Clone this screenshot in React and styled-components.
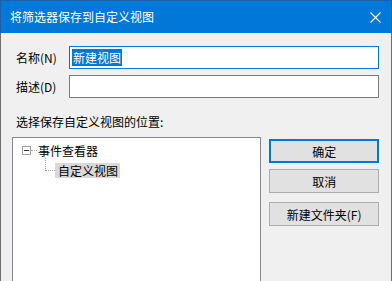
import styled, { createGlobalStyle } from "styled-components";

const GlobalStyle = createGlobalStyle`
  html, body {
    margin: 0;
    padding: 0;
    overflow: hidden;
    background: #f0f0f0;
  }
  * {
    box-sizing: border-box;
  }
`;

function CloseIcon() {
  return (
    <svg width="11" height="11" viewBox="0 0 11 11">
      <path d="M0.5 0.5 L10.5 10.5 M10.5 0.5 L0.5 10.5" stroke="#fff" strokeWidth="1.1" fill="none" />
    </svg>
  );
}

function App() {
  return (
    <>
      <GlobalStyle />
      <Window>
        <TitleBar>
          <Title>将筛选器保存到自定义视图</Title>
          <CloseBtn>
            <CloseIcon />
          </CloseBtn>
        </TitleBar>
        <Body>
          <Form>
            <Label>名称(N)</Label>
            <TextBox $focused>
              <Selected>新建视图</Selected>
            </TextBox>
            <Label>描述(D)</Label>
            <TextBox />
          </Form>
          <Caption>选择保存自定义视图的位置:</Caption>
          <Lower>
            <Tree>
              <ParentRow>
                <Expander />
                <HLine />
                <ItemText>事件查看器</ItemText>
              </ParentRow>
              <ChildRow>
                <Connector />
                <ItemText $selected>自定义视图</ItemText>
              </ChildRow>
            </Tree>
            <Buttons>
              <Button $default>确定</Button>
              <Button>取消</Button>
              <Button $spaced>新建文件夹(F)</Button>
            </Buttons>
          </Lower>
        </Body>
      </Window>
    </>
  );
}

const Window = styled.div`
  width: 392px;
  height: 281px;
  overflow: hidden;
  display: flex;
  flex-direction: column;
  font-family: "Noto Sans CJK SC", "Noto Sans", sans-serif;
  font-size: 12px;
  color: #000;
`;

const TitleBar = styled.div`
  flex: none;
  height: 33px;
  background: #0078d7;
  border: 1px solid #1c5fa6;
  border-bottom: none;
  display: flex;
  align-items: center;
  justify-content: space-between;
  padding: 0 10px 0 9px;
`;

const Title = styled.div`
  color: #fff;
  font-size: 12px;
  line-height: 16px;
`;

const CloseBtn = styled.div`
  width: 11px;
  height: 11px;
  display: flex;
  margin-top: 1px;
`;

const Body = styled.div`
  flex: 1;
  min-height: 0;
  overflow: hidden;
  background: #f0f0f0;
  border-left: 1px solid #6d6d6d;
  border-right: 1px solid #6d6d6d;
  padding: 13px 12px 0 11px;
  display: flex;
  flex-direction: column;
`;

const Form = styled.div`
  display: grid;
  grid-template-columns: 57px 1fr;
  row-gap: 6px;
  align-items: center;
`;

const Label = styled.div`
  padding-left: 4px;
  line-height: 16px;
`;

const TextBox = styled.div`
  height: 23px;
  background: #fff;
  border: 1px solid ${({ $focused }) => ($focused ? "#0078d7" : "#7a7a7a")};
  padding: 1px 2px;
  display: flex;
  align-items: center;
`;

const Selected = styled.span`
  background: #0078d7;
  color: #fff;
  line-height: 17px;
  padding: 0 1px;
`;

const Caption = styled.div`
  margin-top: 16px;
  padding-left: 4px;
  line-height: 16px;
`;

const Lower = styled.div`
  flex: none;
  display: flex;
  gap: 8px;
  margin-top: 7px;
`;

const Tree = styled.div`
  width: 250px;
  height: 170px;
  background: #fff;
  border: 1px solid #828790;
  padding-top: 4px;
  display: flex;
  flex-direction: column;
`;

const ParentRow = styled.div`
  display: flex;
  align-items: center;
  height: 16px;
  padding-left: 9px;
`;

const Expander = styled.div`
  width: 9px;
  height: 9px;
  border: 1px solid #a0a0a0;
  position: relative;
  &::after {
    content: "";
    position: absolute;
    left: 1px;
    top: 3px;
    width: 5px;
    height: 1px;
    background: #333;
  }
`;

const HLine = styled.div`
  width: 6px;
  border-top: 1px dotted #a0a0a0;
  margin-right: 1px;
`;

const ChildRow = styled.div`
  display: flex;
  align-items: flex-start;
  padding-left: 32px;
`;

const Connector = styled.div`
  width: 10px;
  height: 13px;
  border-left: 1px dotted #a0a0a0;
  border-bottom: 1px dotted #a0a0a0;
`;

const ItemText = styled.div`
  line-height: 15px;
  background: ${({ $selected }) => ($selected ? "#d9d9d9" : "transparent")};
  margin-top: ${({ $selected }) => ($selected ? "5px" : "0")};
  padding: ${({ $selected }) => ($selected ? "0 2px 0 3px" : "0")};
`;

const Buttons = styled.div`
  width: 110px;
  display: flex;
  flex-direction: column;
  gap: 6px;
  padding-top: 2px;
`;

const Button = styled.div`
  height: 24px;
  background: #e1e1e1;
  border: ${({ $default }) => ($default ? "2px solid #0078d7" : "1px solid #adadad")};
  display: flex;
  align-items: center;
  justify-content: center;
  margin-top: ${({ $spaced }) => ($spaced ? "3px" : "0")};
`;

export default App;
